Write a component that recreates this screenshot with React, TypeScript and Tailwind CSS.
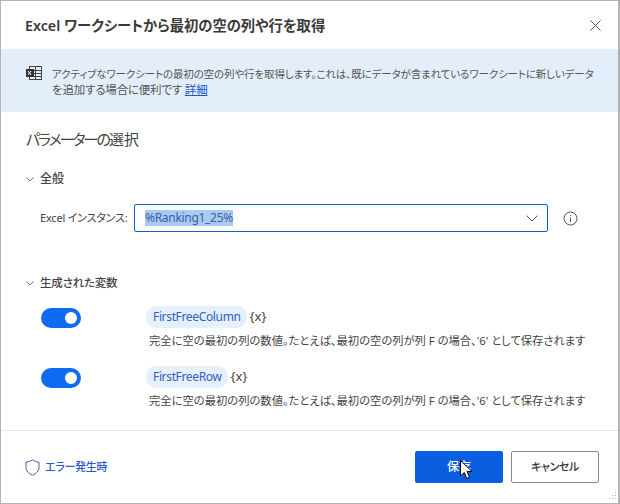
const font = { fontFamily: '"Noto Sans", "Noto Sans CJK JP", sans-serif' };

function VariableRow({ name }: { name: string }) {
  return (
    <div className="flex">
      <div className="w-[105px] pt-[2px]">
        <div className="flex h-[20px] w-[40px] items-center justify-end rounded-full bg-[#0f6cf2] pr-[4px]">
          <div className="h-[12px] w-[12px] rounded-full bg-white" />
        </div>
      </div>
      <div>
        <div className="flex items-center gap-[3px]">
          <span className="flex h-[22px] items-center rounded-[10px] bg-[#e6effc] pr-[6px] pl-[7px] text-[12px] tracking-[-0.35px] text-[#2f5fc0]">
            {name}
          </span>
          <span className="text-[13px] text-[#444]">{"{x}"}</span>
        </div>
        <p className="mt-[5px] pl-[3px] text-[11.3px] leading-[16px] whitespace-nowrap text-[#444]">
          完全に空の最初の列の数値。たとえば、最初の空の列が列 F の場合、'6' として保存されます
        </p>
      </div>
    </div>
  );
}

export default function App() {
  return (
    <div
      style={font}
      className="relative flex h-[504px] w-[620px] flex-col overflow-hidden border border-r-2 border-[#b4b4b4] bg-white text-[#333] [font-feature-settings:'palt']"
    >
      <div className="flex h-[48px] shrink-0 items-center justify-between pr-[17px] pl-[24px]">
        <h1 className="mt-[2px] text-[14.3px] font-semibold text-[#3a3a3a]">
          Excel ワークシートから最初の空の列や行を取得
        </h1>
        <svg width="11" height="11" viewBox="0 0 11 11" stroke="#555" strokeWidth="1" fill="none">
          <path d="M.5.5l10 10M10.5.5l-10 10" />
        </svg>
      </div>

      <div className="flex h-[63px] shrink-0 bg-[#e4eefb] pt-[17px] pl-[25px]">
        <svg width="16" height="15" viewBox="0 0 16 15" className="shrink-0" fill="none">
          <rect x="3.5" y=".5" width="12" height="13" stroke="#444" />
          <path d="M9.5 1v12M4 4.5h11M4 7.5h11M4 10.5h11" stroke="#444" />
          <rect y="3" width="8" height="8" fill="#333" />
          <path d="M2 5l3 4M5 5L2 9" stroke="#fff" />
        </svg>
        <p className="ml-[10px] text-[10.5px] leading-[16px] tracking-[-0.13px] whitespace-nowrap text-[#555]">
          アクティブなワークシートの最初の空の列や行を取得します。これは、既にデータが含まれているワークシートに新しいデータ
          <br />
          <span className="text-[11.5px] tracking-[-0.2px]">
            を追加する場合に便利です <span className="text-[#1d56c8] underline">詳細</span>
          </span>
        </p>
      </div>

      <div className="flex-1 pl-[25px]">
        <h2 className="mt-[15px] text-[15px] leading-[24px] text-[#444]">
          <span className="tracking-[-2px]">パラメーターの</span>選択
        </h2>

        <div className="mt-[18px] flex h-[20px] items-center gap-[6px] text-[12px] font-medium text-[#444]">
          <svg width="8" height="5" viewBox="0 0 8 5" fill="none" stroke="#777">
            <path d="M.5.5L4 4 7.5.5" />
          </svg>
          全般
        </div>

        <div className="mt-[15px] flex items-center pl-[14px]">
          <span className="w-[94px] text-[11px] tracking-[-0.2px] whitespace-nowrap text-[#444]">Excel インスタンス:</span>
          <div className="flex h-[28px] w-[414px] items-center justify-between rounded-[2px] border border-[#0f63c4] pr-[9px] pl-[10px]">
            <span className="bg-[#a8cbf5] text-[12px] leading-[16px] tracking-[-0.3px] text-[#3c5fa0]">%Ranking1_25%</span>
            <svg width="12" height="7" viewBox="0 0 12 7" fill="none" stroke="#555">
              <path d="M.5.5L6 6 11.5.5" />
            </svg>
          </div>
          <svg width="15" height="15" viewBox="0 0 15 15" fill="none" stroke="#555" className="ml-[15px]">
            <circle cx="7.500" cy="7.500" r="6.500" />
            <path d="M7.500 6.500v4.500M7.500 4v1.200" />
          </svg>
        </div>

        <div className="mt-[41px] flex h-[20px] items-center gap-[6px] text-[11.5px] font-medium tracking-[-0.2px] text-[#444]">
          <svg width="8" height="5" viewBox="0 0 8 5" fill="none" stroke="#777">
            <path d="M.5.5L4 4 7.5.5" />
          </svg>
          生成された変数
        </div>

        <div className="mt-[13px] flex flex-col gap-[17px] pl-[15px]">
          <VariableRow name="FirstFreeColumn" />
          <VariableRow name="FirstFreeRow" />
        </div>
      </div>

      <div className="flex h-[73px] shrink-0 items-center justify-between border-t border-[#e8e8e8] pr-[19px] pl-[24px]">
        <div className="flex items-center gap-[5px] text-[11px] font-medium tracking-[-0.3px] text-[#2a5ac8]">
          <svg width="15" height="17" viewBox="0 0 15 17" fill="none" stroke="#3d5fb0">
            <path d="M7.500.8C5.500 2.400 3.300 3 1 3v5.500c0 3.400 2.600 6 6.500 7.700C11.400 14.500 14 11.900 14 8.500V3c-2.300 0-4.500-.6-6.500-2.200z" />
          </svg>
          エラー発生時
        </div>
        <div className="flex gap-[8px]">
          <button className="h-[32px] w-[88px] rounded-[2px] bg-[#0a5fe0] text-[12px] font-medium text-white">保存</button>
          <button className="h-[32px] w-[88px] rounded-[2px] border border-[#8a8a8a] bg-white text-[11px] font-medium tracking-[-0.4px] text-[#333]">キャンセル</button>
        </div>
      </div>

      {/* mouse pointer over the save button */}
      <svg width="13" height="20" viewBox="0 0 13 20" className="absolute top-[459px] left-[459px]">
        <path d="M.5.5v15.500l3.800-3.500 2.400 6 2.800-1.200-2.500-5.800h5z" fill="#fff" stroke="#000" />
      </svg>

      {/* resize grip */}
      <svg width="11" height="11" viewBox="0 0 11 11" className="absolute right-0 bottom-0" fill="#b0b0b0">
        <rect x="8" y="0" width="1" height="1" />
        <rect x="8" y="3" width="1" height="1" />
        <rect x="5" y="3" width="1" height="1" />
        <rect x="8" y="6" width="1" height="1" />
        <rect x="5" y="6" width="1" height="1" />
        <rect x="2" y="6" width="1" height="1" />
      </svg>
    </div>
  );
}
